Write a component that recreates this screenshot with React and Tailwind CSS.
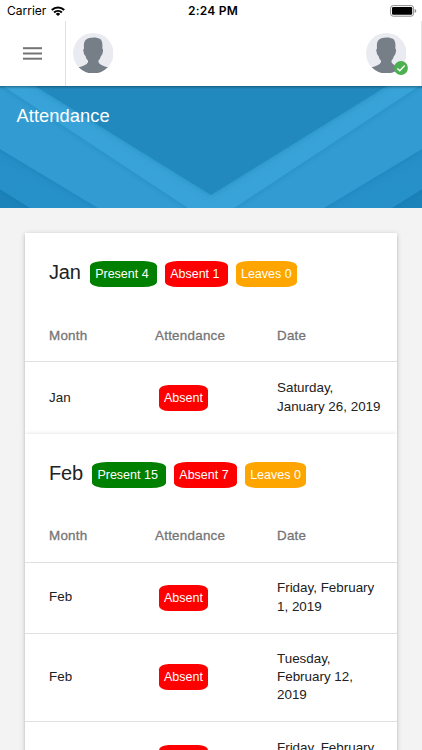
import React from 'react';

const MONTHS = [
  {
    name: 'Jan',
    present: 4,
    absent: 1,
    leaves: 0,
    rows: [{ date: 'Saturday, January 26, 2019', height: 'h-[71.5px]' }],
  },
  {
    name: 'Feb',
    present: 15,
    absent: 7,
    leaves: 0,
    rows: [
      { date: 'Friday, February 1, 2019', height: 'h-[71px]' },
      { date: 'Tuesday, February 12, 2019', height: 'h-[88.5px]' },
      { date: 'Friday, February 15, 2019', height: 'h-[71px]' },
    ],
  },
];

function Avatar() {
  return (
    <svg viewBox="0 0 40 40" className="block h-[40.5px] w-[40.5px]">
      <defs>
        <clipPath id="avatar-clip">
          <circle cx="20" cy="20" r="20" />
        </clipPath>
      </defs>
      <circle cx="20" cy="20" r="20" fill="#e9ebf0" />
      <path
        clipPath="url(#avatar-clip)"
        fill="#767e88"
        d="M10.9 15.2C10.2 9 12 6 16 5C19 4 24.5 4.1 27 6C29 8 29.4 11.4 28.9 15.2C30.1 15.8 29.8 18.4 29 20.6C28.6 22 28.2 22.4 27.6 22.6C27 24.6 26.2 26 25.2 27.2V28.8C26.4 31.2 29.8 32.6 35 34V41H5V34C10.2 32.6 13.6 31.2 14.8 28.8V27.2C13.6 26 12.9 24.6 12.4 22.6C11.6 22.4 11.1 21.4 10.7 19.8C10 17.4 9.8 15.8 10.9 15.2Z"
      />
    </svg>
  );
}

function StatusBar() {
  return (
    <div className="flex h-[21px] items-center justify-between pr-[5px] pl-[7px] font-['Inter',sans-serif] text-black">
      <div className="flex flex-1 items-center gap-[5px]">
        <span className="text-[12px] leading-none">Carrier</span>
        <svg viewBox="0 0 14 10" className="h-[10px] w-[14px]">
          <g fill="none" stroke="#000" strokeWidth="2.1">
            <path d="M0.8 4A9 9 0 0 1 13.2 4" />
            <path d="M3.1 6.5A5.7 5.7 0 0 1 10.9 6.5" />
          </g>
          <path d="M7 10L4.8 7.9A3.2 3.2 0 0 1 9.2 7.9Z" />
        </svg>
      </div>
      <span className="pl-[2px] text-[12px] leading-none font-semibold tracking-[0.2px]">2:24 PM</span>
      <div className="flex flex-1 justify-end">
        <svg viewBox="0 0 27 12" className="h-3 w-[27px]">
          <rect x="0.6" y="0.6" width="23" height="10.6" rx="2.6" fill="none" stroke="#8c8c8c" />
          <rect x="2" y="2" width="20.2" height="7.8" rx="1.3" />
          <path d="M24.7 4Q26.3 4.6 26.3 5.9T24.7 7.8Z" fill="#8c8c8c" />
        </svg>
      </div>
    </div>
  );
}

function Toolbar() {
  return (
    <div className="flex h-[65px] items-center border-r border-[#e2e2e2] pb-px">
      <div className="-mb-px flex h-[65px] w-[66px] items-center justify-center border-r border-[#e0e0e0]">
        <svg viewBox="0 0 19 13" className="mb-px h-[13px] w-[19px]" fill="#757575">
          <rect y="0.2" width="19" height="2" />
          <rect y="5.5" width="19" height="2" />
          <rect y="10.7" width="19" height="2" />
        </svg>
      </div>
      <div className="flex-1 pl-[6.5px]">
        <Avatar />
      </div>
      <div className="relative mr-[15px]">
        <Avatar />
        <svg viewBox="0 0 14 14" className="absolute -right-[2px] -bottom-[2px] h-[14px] w-[14px]">
          <circle cx="7" cy="7" r="6.9" fill="#4caf50" />
          <path d="M3.4 7.4L5.8 9.7L10.7 4.6" fill="none" stroke="#fff" strokeWidth="1.4" />
        </svg>
      </div>
    </div>
  );
}

function Banner() {
  return (
    <div className="relative h-[122px] overflow-hidden bg-[#329cd2]">
      <svg viewBox="0 0 422 122" className="absolute inset-0 h-full w-full">
        <defs>
          <filter id="fold" x="-10%" y="-20%" width="120%" height="140%">
            <feDropShadow dx="0" dy="1" stdDeviation="3" floodColor="#10679c" floodOpacity="0.28" />
          </filter>
          <linearGradient id="corner" x1="0" y1="0" x2="0" y2="1">
            <stop offset="0" stopColor="#248bc2" />
            <stop offset="1" stopColor="#2792ca" />
          </linearGradient>
        </defs>
        <rect width="422" height="122" fill="#1c83ba" />
        <g filter="url(#fold)">
          <path d="M-10 97L30 122L60 150H362L392 122L432 97V-20H-10Z" fill="url(#corner)" />
        </g>
        <g filter="url(#fold)">
          <path d="M-10 57L98 122L140 147H282L324 122L432 57V-20H-10Z" fill="#329cd2" />
        </g>
        <g filter="url(#fold)">
          <path d="M-28 -20L3 0L188 122L211 137L234 122L419 0L450 -20Z" fill="#39a3d8" />
        </g>
        <g filter="url(#fold)">
          <path d="M2 -20L35 0L211 109L387 0L420 -20Z" fill="#2189be" />
        </g>
      </svg>
      <h1 className="relative pt-[18.5px] pl-[16.5px] text-[18.3px] leading-[22px] tracking-[0.08px] text-white">
        Attendance
      </h1>
      <div className="absolute inset-x-0 top-0 h-[3px] bg-gradient-to-b from-black/30 to-transparent" />
    </div>
  );
}

function Tag({ color, children }) {
  return (
    <span
      className={`inline-block h-[26px] rounded-[20%] px-[5px] text-[12.5px] leading-[26px] tracking-normal whitespace-pre text-white ${color}`}
    >
      {children}
    </span>
  );
}

function MonthCard({ month }) {
  return (
    <section className="bg-white text-[13.4px] text-[#212121] shadow-[0_1px_5px_rgba(0,0,0,0.2),0_2px_2px_rgba(0,0,0,0.1)]">
      <div className="flex h-[78px] items-center gap-2 pl-6">
        <h2 className="mr-[1.5px] text-[20px] leading-none tracking-[-0.2px]">{month.name}</h2>
        <div className="flex gap-2 pt-1">
          <Tag color="bg-[#008000]">{`Present ${month.present} `}</Tag>
          <Tag color="bg-[#ff0000]">{`Absent ${month.absent} `}</Tag>
          <Tag color="bg-[#ffa500]">{`Leaves ${month.leaves}`}</Tag>
        </div>
      </div>
      <div className="grid h-[51px] grid-cols-[106px_122px_1fr] items-center border-b border-[#e0e0e0] pl-6 tracking-[0.25px] text-[#757575] [-webkit-text-stroke:0.3px_#757575]">
        <span>Month</span>
        <span>Attendance</span>
        <span>Date</span>
      </div>
      {month.rows.map((row) => (
        <div
          key={row.date}
          className={`grid grid-cols-[106px_122px_1fr] items-center border-b border-[#e0e0e0] pr-4 pl-6 last:border-b-0 ${row.height}`}
        >
          <span>{month.name}</span>
          <span className="pl-1">
            <Tag color="bg-[#ff0000]">Absent</Tag>
          </span>
          <span className="leading-[18.3px]">{row.date}</span>
        </div>
      ))}
    </section>
  );
}

export default function App() {
  return (
    <div className="flex h-[750px] flex-col overflow-hidden bg-[#f3f3f3] font-['Liberation_Sans',Arial,sans-serif]">
      <header className="shrink-0 bg-white">
        <StatusBar />
        <Toolbar />
      </header>
      <div className="shrink-0">
        <Banner />
      </div>
      <main className="flex flex-col pt-[25px] pr-[25px] pl-[25px]">
        {MONTHS.map((month) => (
          <MonthCard key={month.name} month={month} />
        ))}
      </main>
    </div>
  );
}
